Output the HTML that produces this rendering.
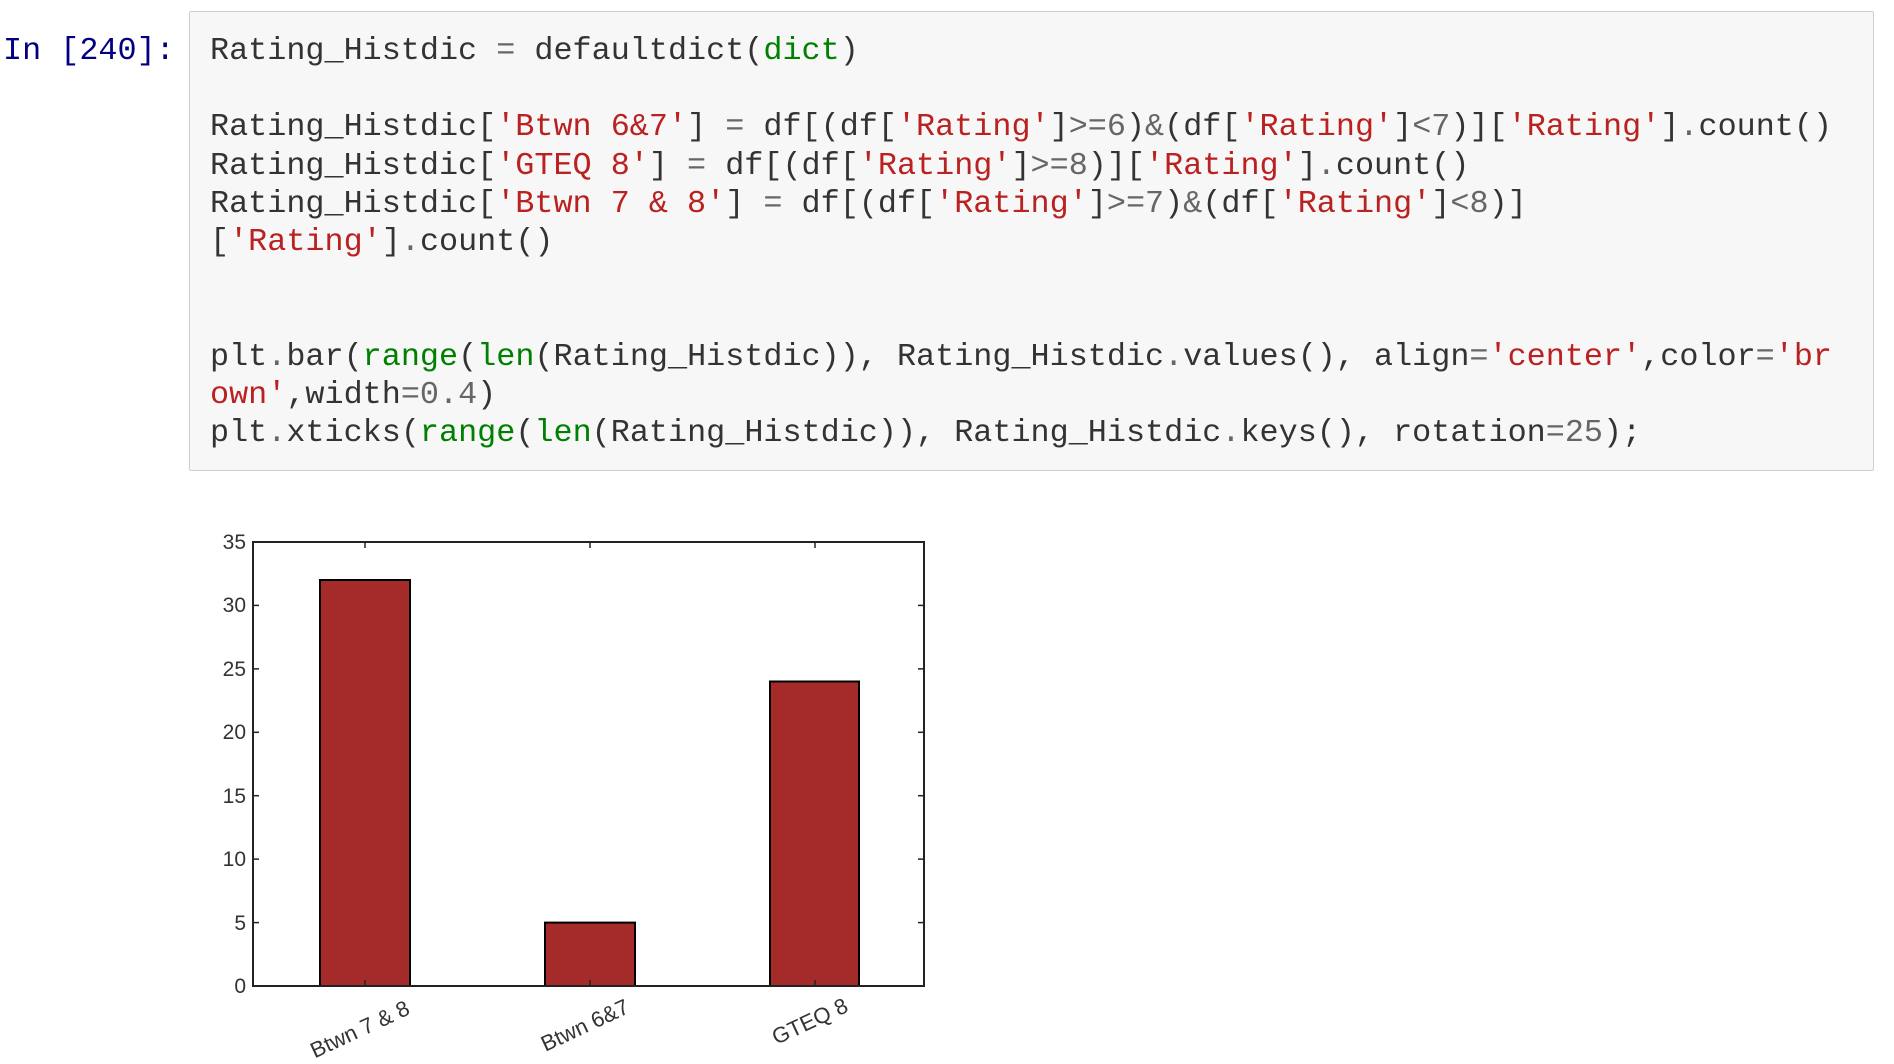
<!DOCTYPE html>
<html><head><meta charset="utf-8"><style>
html,body{margin:0;padding:0;background:#fff;width:1894px;height:1064px;overflow:hidden;}
.prompt{position:absolute;left:3px;top:32px;font:31.8px/38.2px "Liberation Mono",monospace;color:#000080;}
.box{position:absolute;left:189px;top:11px;width:1683px;height:458px;background:#f7f7f7;border:1.5px solid #cfcfcf;border-radius:2px;}
pre{position:absolute;left:20px;top:20px;margin:0;font:31.8px/38.2px "Liberation Mono",monospace;color:#333;}
.s{color:#ba2121}.b{color:#008000}.o{color:#666}
svg{position:absolute;left:0;top:0;}
</style></head><body>
<div class="prompt">In [240]:</div>
<div class="box"><pre>Rating_Histdic <span class="o">=</span> defaultdict(<span class="b">dict</span>)

Rating_Histdic[<span class="s">'Btwn 6&amp;7'</span>] <span class="o">=</span> df[(df[<span class="s">'Rating'</span>]<span class="o">&gt;=6</span>)<span class="o">&amp;</span>(df[<span class="s">'Rating'</span>]<span class="o">&lt;7</span>)][<span class="s">'Rating'</span>]<span class="o">.</span>count()
Rating_Histdic[<span class="s">'GTEQ 8'</span>] <span class="o">=</span> df[(df[<span class="s">'Rating'</span>]<span class="o">&gt;=8</span>)][<span class="s">'Rating'</span>]<span class="o">.</span>count()
Rating_Histdic[<span class="s">'Btwn 7 &amp; 8'</span>] <span class="o">=</span> df[(df[<span class="s">'Rating'</span>]<span class="o">&gt;=7</span>)<span class="o">&amp;</span>(df[<span class="s">'Rating'</span>]<span class="o">&lt;8</span>)]
[<span class="s">'Rating'</span>]<span class="o">.</span>count()


plt<span class="o">.</span>bar(<span class="b">range</span>(<span class="b">len</span>(Rating_Histdic)), Rating_Histdic<span class="o">.</span>values(), align<span class="o">=</span><span class="s">'center'</span>,color<span class="o">=</span><span class="s">'br</span>
<span class="s">own'</span>,width<span class="o">=0.4</span>)
plt<span class="o">.</span>xticks(<span class="b">range</span>(<span class="b">len</span>(Rating_Histdic)), Rating_Histdic<span class="o">.</span>keys(), rotation<span class="o">=25</span>);</pre></div>
<svg width="1894" height="1064" font-family="Liberation Sans, sans-serif" font-size="21" fill="#333">
<g fill="#a52a2a" stroke="#000" stroke-width="2">
<rect x="320" y="580" width="90" height="406"/>
<rect x="545" y="922.6" width="90" height="63.4"/>
<rect x="770" y="681.5" width="89" height="304.5"/>
</g>
<rect x="253" y="542" width="671" height="444" fill="none" stroke="#222" stroke-width="2"/>
<g stroke="#222" stroke-width="1.5">
<line x1="253" y1="922.6" x2="259" y2="922.6"/><line x1="918" y1="922.6" x2="924" y2="922.6"/>
<line x1="253" y1="859.1" x2="259" y2="859.1"/><line x1="918" y1="859.1" x2="924" y2="859.1"/>
<line x1="253" y1="795.7" x2="259" y2="795.7"/><line x1="918" y1="795.7" x2="924" y2="795.7"/>
<line x1="253" y1="732.3" x2="259" y2="732.3"/><line x1="918" y1="732.3" x2="924" y2="732.3"/>
<line x1="253" y1="668.9" x2="259" y2="668.9"/><line x1="918" y1="668.9" x2="924" y2="668.9"/>
<line x1="253" y1="605.4" x2="259" y2="605.4"/><line x1="918" y1="605.4" x2="924" y2="605.4"/>
<line x1="365" y1="542" x2="365" y2="548"/><line x1="590" y1="542" x2="590" y2="548"/><line x1="815" y1="542" x2="815" y2="548"/>
<line x1="365" y1="980" x2="365" y2="986"/><line x1="590" y1="980" x2="590" y2="986"/><line x1="815" y1="980" x2="815" y2="986"/>
</g>
<g text-anchor="end">
<text x="246" y="993">0</text><text x="246" y="930">5</text><text x="246" y="866">10</text>
<text x="246" y="803">15</text><text x="246" y="739">20</text><text x="246" y="676">25</text>
<text x="246" y="612">30</text><text x="246" y="549">35</text>
</g>
<g text-anchor="middle" font-size="22">
<text transform="translate(363,1036) rotate(-25)">Btwn 7 &amp; 8</text>
<text transform="translate(588,1032) rotate(-25)">Btwn 6&amp;7</text>
<text transform="translate(813,1028) rotate(-25)">GTEQ 8</text>
</g>
</svg>
</body></html>
